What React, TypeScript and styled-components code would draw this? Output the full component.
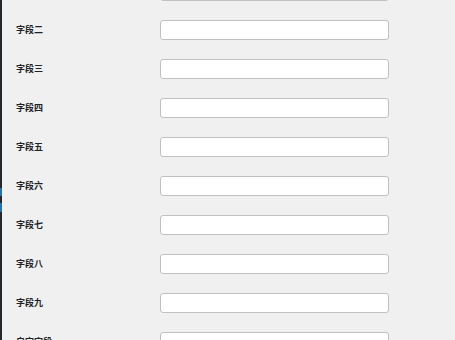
import React from 'react';
import styled, { createGlobalStyle } from 'styled-components';

const GlobalStyle = createGlobalStyle`
  html, body {
    margin: 0;
    padding: 0;
    background: #f0f0f1;
    overflow: hidden;
  }
  body {
    font-family: "Noto Sans CJK SC", "Noto Sans", sans-serif;
    color: #1d2327;
  }
`;

// first row is scrolled mostly out of view, only its input's lower edge shows
const fields = ['', '字段二', '字段三', '字段四', '字段五', '字段六', '字段七', '字段八', '字段九', '自定字段'];

const Page = styled.div`
  display: flex;
  height: 340px;
  overflow: hidden;
`;

const Sidebar = styled.div`
  width: 2px;
  flex-shrink: 0;
  background: #23282d;
  display: flex;
  flex-direction: column;
  padding-top: 188px;
`;

const MenuMark = styled.div<{ h: number }>`
  height: ${p => p.h}px;
  background: #2271b1;
  margin-bottom: 7px;
`;

const Content = styled.div`
  flex: 1;
  padding-left: 14px;
  margin-top: -29px;
`;

const Row = styled.div`
  display: grid;
  grid-template-columns: 144px 229px;
  align-items: center;
  height: 39px;
`;

const Label = styled.label`
  font-size: 9px;
  font-weight: 700;
  line-height: 1;
`;

const Input = styled.input`
  box-sizing: border-box;
  height: 20px;
  width: 229px;
  margin: 0;
  background: #fff;
  border: 1px solid #bfc0c3;
  border-radius: 3px;
  outline: none;
`;

const App: React.FC = () => (
  <>
    <GlobalStyle />
    <Page>
      <Sidebar>
        <MenuMark h={8} />
        <MenuMark h={9} />
      </Sidebar>
      <Content>
        {fields.map((name, i) => (
          <Row key={i}>
            <Label>{name}</Label>
            <Input type="text" />
          </Row>
        ))}
      </Content>
    </Page>
  </>
);

export default App;
